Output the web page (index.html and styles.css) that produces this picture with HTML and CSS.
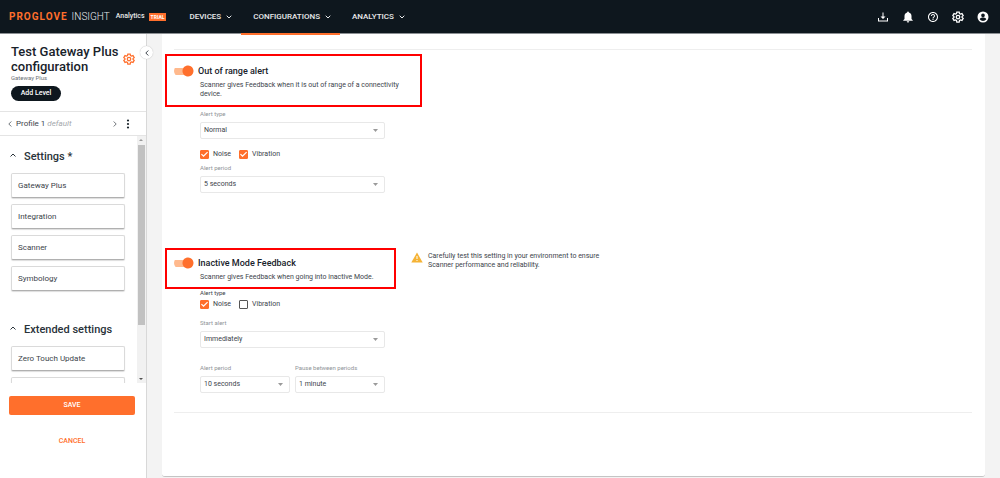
FILE: index.html
```html
<!DOCTYPE html>
<html lang="en">
<head>
<meta charset="utf-8">
<meta name="viewport" content="width=device-width, initial-scale=1">
<title>Test Gateway Plus configuration</title>
<link rel="stylesheet" href="styles.css">
</head>
<body>
<header class="topbar">
  <a class="brand" href="#"><span class="brand-name">PROGLOVE</span><span class="brand-product">INSIGHT</span></a>
  <span class="edition">Analytics</span>
  <span class="trial">TRIAL</span>
  <nav class="nav">
    <a class="nav-item" href="#">DEVICES <svg class="caret" viewBox="0 0 6 4"><path d="M.7.7 3 3 5.300.7"/></svg></a>
    <a class="nav-item nav-active" href="#">CONFIGURATIONS <svg class="caret" viewBox="0 0 6 4"><path d="M.7.7 3 3 5.300.7"/></svg></a>
    <a class="nav-item" href="#">ANALYTICS <svg class="caret" viewBox="0 0 6 4"><path d="M.7.7 3 3 5.300.7"/></svg></a>
  </nav>
  <div class="actions">
    <button class="icon-button" aria-label="Download"><svg viewBox="0 0 24 24"><path d="M11 3h2v8h4l-5 5-5-5h4zM2 14h2v5h16v-5h2v7H2z"/></svg></button>
    <button class="icon-button" aria-label="Notifications"><svg viewBox="0 0 24 24"><path d="M12 23a2.500 2.500 0 0 0 2.500-2.500h-5A2.500 2.500 0 0 0 12 23zm7-7v-6c0-3.300-2-6-5.300-6.800V2.500a1.700 1.700 0 0 0-3.400 0v.7C7 4 5 6.700 5 10v6l-2.500 2.500v1h19v-1z"/></svg></button>
    <button class="icon-button" aria-label="Help"><svg viewBox="0 0 24 24"><path d="M11 18h2v-2h-2v2zm1-16C6.480 2 2 6.480 2 12s4.480 10 10 10 10-4.480 10-10S17.520 2 12 2zm0 18c-4.410 0-8-3.590-8-8s3.590-8 8-8 8 3.590 8 8-3.590 8-8 8zm0-14c-2.210 0-4 1.790-4 4h2c0-1.100.9-2 2-2s2 .9 2 2c0 2-3 1.750-3 5h2c0-2.250 3-2.500 3-5 0-2.210-1.790-4-4-4z"/></svg></button>
    <button class="icon-button" aria-label="Settings"><svg viewBox="0 0 24 24"><g class="outline outline-light"><path d="M9.600 2h4.800l.6 3 2 1.200 3-1 2.400 4.100-2.300 2v1.400l2.300 2-2.400 4.100-3-1-2 1.200-.6 3H9.600L9 19l-2-1.200-3 1-2.400-4.100 2.300-2v-1.400l-2.300-2L4 5.200l3 1L9 5z"/><circle cx="12" cy="12" r="3.500"/></g></svg></button>
    <button class="icon-button" aria-label="Account"><svg viewBox="0 0 24 24"><path fill-rule="evenodd" d="M12 1a11 11 0 1 0 0 22 11 11 0 0 0 0-22zm0 4a3.700 3.700 0 1 1 0 7.400A3.700 3.700 0 0 1 12 5zm0 15a8 8 0 0 1-6.600-3.500c0-2.200 4.400-3.300 6.600-3.300s6.600 1.100 6.600 3.300A8 8 0 0 1 12 20z"/></svg></button>
  </div>
</header>
<div class="layout">
  <aside class="sidebar">
    <div class="config-head">
      <div class="title-row">
        <h1 class="title">Test Gateway Plus configuration</h1>
        <button class="gear" aria-label="Edit configuration"><svg viewBox="0 0 24 24"><g class="outline"><path d="M9.600 2h4.800l.6 3 2 1.200 3-1 2.400 4.100-2.300 2v1.400l2.300 2-2.400 4.100-3-1-2 1.200-.6 3H9.600L9 19l-2-1.200-3 1-2.400-4.100 2.300-2v-1.400l-2.300-2L4 5.200l3 1L9 5z"/><circle cx="12" cy="12" r="3.500"/></g></svg></button>
      </div>
      <div class="subtitle">Gateway Plus</div>
      <button class="add-level">Add Level</button>
    </div>
    <button class="collapse" aria-label="Collapse sidebar"><svg class="chevron" viewBox="0 0 4 6"><path d="M3.300.5.8 3l2.500 2.500"/></svg></button>
    <div class="profile">
      <button class="step" aria-label="Previous profile"><svg class="chevron" viewBox="0 0 4 6"><path d="M3.300.5.8 3l2.500 2.500"/></svg></button>
      <span class="profile-name">Profile 1 <em>default</em></span>
      <button class="step" aria-label="Next profile"><svg class="chevron" viewBox="0 0 4 6"><path d="M.7.5 3.200 3 .7 5.500"/></svg></button>
      <button class="more" aria-label="Profile menu"><svg viewBox="0 0 4 10"><circle cx="2" cy="1.500" r="1.100"/><circle cx="2" cy="5" r="1.100"/><circle cx="2" cy="8.500" r="1.100"/></svg></button>
    </div>
    <div class="scroller">
      <div class="groups">
        <section class="group">
          <h2 class="group-title"><svg class="fold" viewBox="0 0 6 4"><path d="M.5 3.500 3 1l2.500 2.500"/></svg>Settings *</h2>
          <button class="card">Gateway Plus</button>
          <button class="card">Integration</button>
          <button class="card">Scanner</button>
          <button class="card">Symbology</button>
        </section>
        <section class="group">
          <h2 class="group-title"><svg class="fold" viewBox="0 0 6 4"><path d="M.5 3.500 3 1l2.500 2.500"/></svg>Extended settings</h2>
          <button class="card">Zero Touch Update</button>
          <button class="card" aria-label="More settings"></button>
        </section>
      </div>
      <div class="scrollbar" aria-hidden="true">
        <svg class="scroll-arrow arrow-up" viewBox="0 0 8 8"><path d="M2 5h4L4 3z"/></svg>
        <div class="thumb"></div>
        <svg class="scroll-arrow" viewBox="0 0 8 8"><path d="M2 3h4L4 5z"/></svg>
      </div>
    </div>
    <div class="footer">
      <button class="save">SAVE</button>
      <button class="cancel">CANCEL</button>
    </div>
  </aside>
  <main class="main">
    <div class="panel">
      <div class="settings">
        <section class="setting">
          <div class="highlight">
            <label class="setting-title"><input class="switch" type="checkbox" role="switch" checked>Out of range alert</label>
            <p class="description">Scanner gives Feedback when it is out of range of a connectivity device.</p>
          </div>
          <div class="fields">
            <label class="label" for="type">Alert type</label>
            <span class="select"><select id="type"><option>Normal</option></select></span>
            <div class="checks checks-spaced">
              <label class="check"><input type="checkbox" checked>Noise</label>
              <label class="check"><input type="checkbox" checked>Vibration</label>
            </div>
            <label class="label" for="period">Alert period</label>
            <span class="select"><select id="period"><option>5 seconds</option></select></span>
          </div>
        </section>
        <section class="setting">
          <div class="setting-head">
            <div class="highlight highlight-small">
              <label class="setting-title"><input class="switch" type="checkbox" role="switch" checked>Inactive Mode Feedback</label>
              <p class="description">Scanner gives Feedback when going into inactive Mode.</p>
            </div>
            <div class="notice">
              <svg class="warning" viewBox="0 0 12 11"><path class="warning-shape" d="M6 .5 11.700 10.500H.3z"/><path class="warning-mark" d="M5.500 4h1v3h-1zm0 4h1v1h-1z"/></svg>
              <p>Carefully test this setting in your environment to ensure Scanner performance and reliability.</p>
            </div>
          </div>
          <div class="fields fields-close">
            <div class="label label-dark">Alert type</div>
            <div class="checks">
              <label class="check"><input type="checkbox" checked>Noise</label>
              <label class="check"><input type="checkbox">Vibration</label>
            </div>
            <label class="label" for="start">Start alert</label>
            <span class="select"><select id="start"><option>Immediately</option></select></span>
            <div class="pair">
              <div class="field"><label class="label" for="period2">Alert period</label>
              <span class="select"><select id="period2"><option>10 seconds</option></select></span></div>
              <div class="field"><label class="label" for="pause">Pause between periods</label>
              <span class="select"><select id="pause"><option>1 minute</option></select></span></div>
            </div>
          </div>
        </section>
      </div>
    </div>
  </main>
</div>
</body>
</html>
```
FILE: styles.css
```css
* { box-sizing: border-box; }

body {
  margin: 0;
  height: 100vh;
  display: flex;
  flex-direction: column;
  overflow: hidden;
  background: #f3f3f3;
  color: #3c444b;
  font: 7px/9px Roboto, "Liberation Sans", sans-serif;
}

h1, h2, p { margin: 0; }
a { color: inherit; text-decoration: none; }
svg { display: block; }

button {
  margin: 0;
  padding: 0;
  border: 0;
  background: none;
  color: inherit;
  font: inherit;
}

.topbar {
  flex: none;
  display: flex;
  align-items: center;
  height: 34px;
  padding: 0 9px;
  border-bottom: 1px solid #8b8f93;
  background: #0e171e;
  color: #e8eaeb;
}

.brand {
  display: flex;
  gap: 4px;
  font-size: 10px;
  line-height: 12px;
}

.brand-name {
  color: #ff6f2c;
  font-weight: 700;
  letter-spacing: 1px;
}

.brand-product { font-weight: 300; }

.edition { margin-left: 6px; font-weight: 500; }

.trial {
  margin-left: 4px;
  padding: 0 2px;
  background: #ff6f2c;
  color: #fff;
  font-size: 5px;
  font-weight: 700;
  line-height: 8px;
}

.nav {
  display: flex;
  align-self: stretch;
  margin-left: 11px;
}

.nav-item {
  position: relative;
  display: flex;
  align-items: center;
  gap: 5px;
  height: 35px;
  padding: 0 9px 0 12px;
  border-bottom: 2px solid transparent;
  font-size: 8px;
  font-weight: 500;
}

.nav-active { border-color: #ff6f2c; }

.caret, .fold { width: 6px; height: 4px; }

.caret, .chevron, .fold {
  fill: none;
  stroke: currentColor;
}

.actions {
  display: flex;
  gap: 13px;
  margin-left: auto;
  padding-right: 2px;
}

.icon-button svg {
  width: 12px;
  height: 12px;
  fill: #fff;
}

.outline {
  fill: none;
  stroke: currentColor;
  stroke-width: 2.500;
}

.outline-light { stroke: #fff; }

.layout {
  flex: 1;
  display: flex;
  min-height: 0;
}

.sidebar {
  position: relative;
  flex: none;
  display: flex;
  flex-direction: column;
  width: 147px;
  border-right: 1px solid #d8d8d8;
  background: #fff;
}

.config-head {
  padding: 10px 11px;
  border-bottom: 1px solid #e4e4e4;
}

.title-row {
  display: flex;
  align-items: center;
  justify-content: space-between;
}

.title {
  color: #18222a;
  font-size: 13px;
  font-weight: 500;
  line-height: 15px;
}

.gear { color: #ff6f2c; }
.gear svg { width: 12px; height: 12px; }

.subtitle { color: #6b7176; font-size: 6px; line-height: 8px; }

.add-level {
  display: block;
  height: 15px;
  margin-top: 4px;
  padding: 0 8px;
  border-radius: 8px;
  background: #0e171e;
  color: #fff;
  font-size: 7px;
  font-weight: 500;
  min-width: 50px;
}

.collapse {
  position: absolute;
  top: 12px;
  right: -7px;
  z-index: 1;
  display: grid;
  place-items: center;
  width: 13px;
  height: 13px;
  border-radius: 50%;
  background: #fff;
  box-shadow: 0 0 1px #aaa;
}

.chevron { width: 4px; height: 6px; }

.profile {
  display: flex;
  align-items: center;
  height: 24px;
  padding: 0 16px 0 8px;
  border-bottom: 1px solid #e4e4e4;
  font-size: 8px;
}

.step { color: #70767b; }
.profile-name { flex: 1; margin-left: 4px; }
.profile em { color: #a4a8ac; }
.more { margin-left: 9px; color: #18222a; }
.more svg { width: 4px; height: 10px; fill: currentColor; }

.scroller {
  display: flex;
  height: 247px;
  overflow: hidden;
}

.groups {
  flex: 1;
  padding: 14px 12px 0 11px;
}

.group {
  display: flex;
  flex-direction: column;
  gap: 6px;
}

.group + .group { margin-top: 32px; }

.group-title {
  display: flex;
  align-items: center;
  gap: 8px;
  margin: 0 0 3px -1px;
  color: #2a333a;
  font-size: 11px;
  font-weight: 500;
  line-height: 14px;
}

.fold { margin-bottom: 4px; }

.card {
  flex: none;
  height: 25px;
  padding: 0 6px;
  border: 1px solid #dadada;
  border-bottom-color: #b0b0b0;
  border-radius: 2px;
  background: #fff;
  box-shadow: 0 1px 1px #ddd;
  font-size: 8px;
  text-align: left;
}

.scrollbar {
  display: flex;
  flex-direction: column;
  justify-content: space-between;
  width: 9px;
  background: #f1f1f1;
}

.scroll-arrow { width: 8px; height: 8px; fill: #505050; }
.arrow-up { fill: #999; }

.thumb {
  flex: none;
  height: 180px;
  margin: 0 1px 50px 1px;
  background: #c1c1c1;
}

.footer {
  display: flex;
  flex-direction: column;
  gap: 17px;
  padding: 13px 11px 0 9px;
}

.save, .cancel {
  height: 19px;
  border-radius: 2px;
  color: #ff6f2c;
  font-weight: 500;
}

.save { background: #ff6f2c; color: #fff; }

.main {
  flex: 1;
  display: flex;
  padding: 0 15px 1px;
}

.panel {
  flex: 1;
  padding: 15px 13px 0 12px;
  border-bottom: 1px solid #c4c4c4;
  border-radius: 0 0 3px 3px;
  background: #fff;
}

.settings {
  padding: 4px 0 19px;
  border: 1px solid #eee;
  border-width: 1px 0;
}

.setting + .setting { margin-top: 55px; }

.highlight {
  max-width: 257px;
  margin-left: -9px;
  padding: 9px 8px 6px 7px;
  border: 2px solid #f00;
}

.highlight-small { width: 231px; padding-bottom: 5px; padding-top: 7px; }

.setting-title {
  display: flex;
  align-items: center;
  gap: 4px;
  height: 12px;
  color: #18222a;
  font-size: 9px;
  font-weight: 500;
}

.switch {
  appearance: none;
  width: 20px;
  height: 12px;
  margin: 0;
  border-radius: 6px;
  background:
    radial-gradient(circle at 14px 6px, #ff6f2c 5px, transparent 6px),
    linear-gradient(#ffb98d, #ffb98d) left / 14px 7px no-repeat;
}

.description { margin: 4px 0 0 26px; }

.setting-head { display: flex; }

.notice {
  display: flex;
  gap: 5px;
  width: 206px;
  margin: 4px 0 0 15px;
}

.warning { flex: none; width: 12px; height: 11px; }
.warning-shape { fill: #f5b335; }
.warning-mark { fill: #fff; }

.fields {
  display: flex;
  flex-direction: column;
  width: 211px;
  padding: 2px 0 0 26px;
}

.fields-close { padding-top: 0; }

.label { color: #8f9498; font-size: 6px; }
.label-dark { color: #3c444b; line-height: 8px; }

.select {
  display: grid;
  align-items: center;
  margin-top: 4px;
}

.select::after {
  content: "";
  grid-area: 1 / 1;
  justify-self: end;
  width: 5px;
  height: 3px;
  margin-right: 7px;
  background: #9a9a9a;
  clip-path: polygon(0 0, 100% 0, 50% 100%);
  pointer-events: none;
}

select {
  grid-area: 1 / 1;
  appearance: none;
  width: 100%;
  height: 17px;
  margin: 0;
  padding: 0 3px;
  border: 1px solid #e8e8e8;
  border-radius: 2px;
  background: #fff;
  color: inherit;
  font: inherit;
}

.checks {
  display: flex;
  gap: 8px;
  margin: 3px 0 9px;
}

.checks-spaced { margin: 11px 0 4px; }

.check {
  display: flex;
  align-items: center;
  gap: 4px;
}

.check input {
  appearance: none;
  display: grid;
  width: 9px;
  height: 9px;
  margin: 0;
  border: 1px solid #555;
  border-radius: 1px;
}

.check input:checked { border-color: #ff6f2c; background: #ff6f2c; }

.check input:checked::before {
  content: "";
  background: #fff;
  clip-path: polygon(0 50%, 12% 38%, 36% 62%, 88% 10%, 100% 22%, 36% 86%);
}

.pair {
  display: grid;
  grid-template-columns: 1fr 1fr;
  gap: 5px;
  margin-top: 15px;
}

.field { display: flex; flex-direction: column; }
```
